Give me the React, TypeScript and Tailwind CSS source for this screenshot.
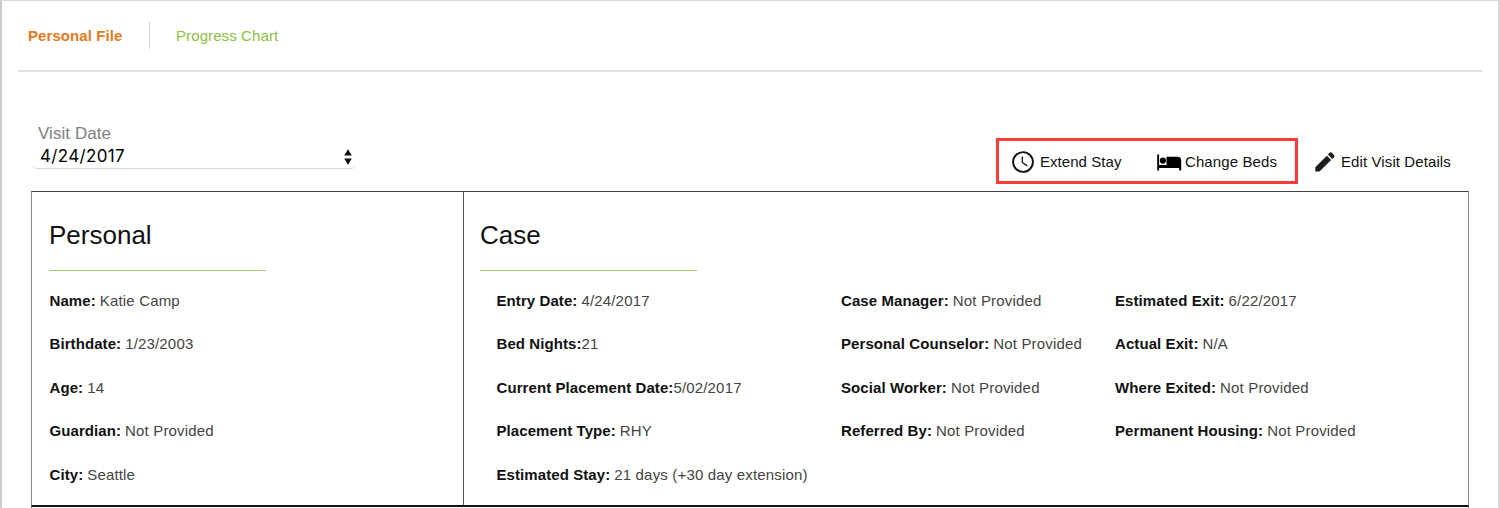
import type { ReactNode } from 'react';

type Entry = { label: string; value: string; tight?: boolean };

const personal: Entry[] = [
  { label: 'Name:', value: 'Katie Camp' },
  { label: 'Birthdate:', value: '1/23/2003' },
  { label: 'Age:', value: '14' },
  { label: 'Guardian:', value: 'Not Provided' },
  { label: 'City:', value: 'Seattle' },
];

const stay: Entry[] = [
  { label: 'Entry Date:', value: '4/24/2017' },
  { label: 'Bed Nights:', value: '21', tight: true },
  { label: 'Current Placement Date:', value: '5/02/2017', tight: true },
  { label: 'Placement Type:', value: 'RHY' },
  { label: 'Estimated Stay:', value: '21 days (+30 day extension)' },
];

const team: Entry[] = [
  { label: 'Case Manager:', value: 'Not Provided' },
  { label: 'Personal Counselor:', value: 'Not Provided' },
  { label: 'Social Worker:', value: 'Not Provided' },
  { label: 'Referred By:', value: 'Not Provided' },
];

const exit: Entry[] = [
  { label: 'Estimated Exit:', value: '6/22/2017' },
  { label: 'Actual Exit:', value: 'N/A' },
  { label: 'Where Exited:', value: 'Not Provided' },
  { label: 'Permanent Housing:', value: 'Not Provided' },
];

function Entries({ items, className = '' }: { items: Entry[]; className?: string }) {
  return (
    <dl className={`text-[15px] leading-[43.4px] whitespace-nowrap ${className}`}>
      {items.map((e) => (
        <div key={e.label} className={`flex h-[43.4px] ${e.tight ? '' : 'gap-1'}`}>
          <dt className="font-bold tracking-[0.08px] text-[#111]">{e.label}</dt>
          <dd className="tracking-[0.17px] text-[#444]">{e.value}</dd>
        </div>
      ))}
    </dl>
  );
}

function Heading({ children }: { children: ReactNode }) {
  return (
    <h2 className="h-[79px] w-[217px] border-b border-[#a3cd75] pt-[25px] text-[26px] leading-[36px] text-[#111]">
      {children}
    </h2>
  );
}

export default function App() {
  return (
    <div
      className="flex h-[508px] w-[1500px] flex-col overflow-hidden border-t border-r-2 border-l-2 border-t-[#dadada] border-r-[#d6d6d6] border-l-[#cbcbcb] bg-white px-4"
      style={{ fontFamily: '"Liberation Sans", Arial, sans-serif' }}
    >
      <nav className="flex h-[71px] shrink-0 items-center border-b-2 border-[#e0e0e0] pl-[10px] text-[15px]">
        <a className="w-[122px] border-r border-[#d8d8d8] font-bold leading-[27px] tracking-[0.08px] text-[#e67a22]">Personal File</a>
        <a className="pl-[26px] leading-[27px] tracking-[0.1px] text-[#8dc044]">Progress Chart</a>
      </nav>

      <div className="flex h-[119px] shrink-0 justify-between pl-[14px]">
        <div className="mt-[52px] w-[324px]">
          <div className="pl-[6px] text-[17px] leading-[20px] tracking-[0.06px] text-[#808080]">Visit Date</div>
          <div
            className="flex h-[25px] items-center justify-between rounded-[5px] border-b border-[#d8d8d8] pr-[4px] pl-[8px] text-[17px] tracking-[0.35px] text-black"
            style={{ fontFamily: 'Inter, sans-serif' }}
          >
            <span className="pt-[2px]">4/24/2017</span>
            <svg className="mt-px h-4 w-2" viewBox="0 0 8 16" fill="#111">
              <path d="M4 .3 7.8 6.5H.2zM4 15.7 .2 9.5h7.6z" />
            </svg>
          </div>
        </div>

        <div className="mt-[66px] flex h-[46px] text-[15px] tracking-[0.1px] text-[#111]">
          <div className="flex w-[302px] items-center border-[3px] border-[#ff3b37] pl-[12px]">
            <svg className="mt-px h-6 w-6" viewBox="0 0 24 24" fill="none" stroke="#111">
              <circle cx="12" cy="12" r="9.9" strokeWidth="1.9" />
              <path d="M11.3 6.5v6l5 3.4" strokeWidth="1.3" />
            </svg>
            <span className="ml-[5px] w-[116px] pt-[2px] tracking-[0.05px]">Extend Stay</span>
            <svg className="mt-[2px] h-[17px] w-[26px]" viewBox="0 0 26 17">
              <path d="M1.2.5h1.9v10.6h7.4V2.8h11.3c2 0 3.4 1.4 3.4 3.5v10.2h-2v-2.4H3.1v2.4H1.2z" />
              <circle cx="6.9" cy="6.6" r="3.1" />
            </svg>
            <span className="ml-[3px] pt-[2px]">Change Beds</span>
          </div>
          <div className="flex w-[184px] items-center pl-[15px]">
            <svg className="mt-px h-6 w-6" viewBox="0 0 24 24" fill="#1d1d1d">
              <path d="M2.3 17.3v4.2h4.2L18.1 9.9l-4.2-4.2zM21.2 6.9c.45-.45.45-1.1 0-1.6l-2.7-2.7c-.45-.45-1.1-.45-1.6 0l-2 2 4.3 4.3z" />
            </svg>
            <span className="ml-[4px] pt-[2px]">Edit Visit Details</span>
          </div>
        </div>
      </div>

      <div className="ml-[13px] flex h-[316px] w-[1438px] shrink-0 border border-b-2 border-t-[#444] border-r-[#888] border-b-[#111] border-l-[#888]">
        <section className="w-[432px] border-r border-[#555] pl-[17px]">
          <Heading>Personal</Heading>
          <Entries items={personal} className="mt-[8px] ml-[0.5px]" />
        </section>
        <section className="flex-1 pl-[16px]">
          <Heading>Case</Heading>
          <div className="mt-[8px] flex pl-[16.5px]">
            <Entries items={stay} className="w-[344.5px]" />
            <Entries items={team} className="w-[274px]" />
            <Entries items={exit} />
          </div>
        </section>
      </div>
      <div className="ml-[13px] h-2 w-[1438px] shrink-0 border-x border-[#888]" />
    </div>
  );
}
